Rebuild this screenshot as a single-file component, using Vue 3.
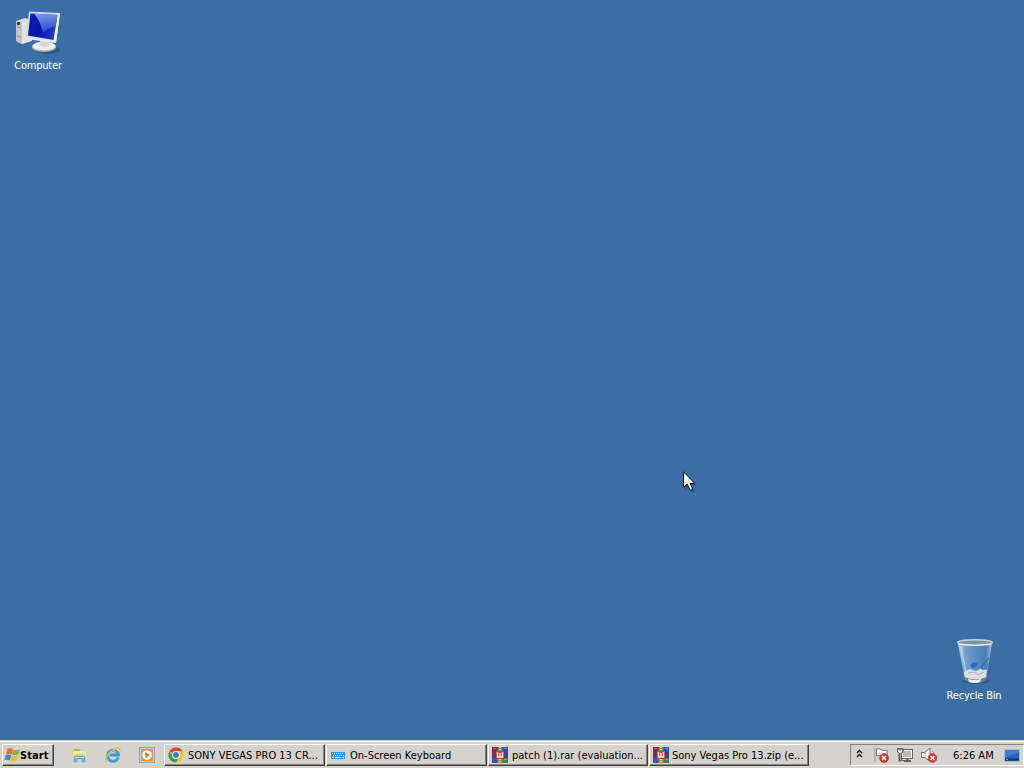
<script setup>
import { ref } from 'vue'

const active = ref('')
const tasks = [
    { id: 'chrome', icon: 'chrome', name: 'SONY VEGAS PRO 13 CR...' },
    { id: 'osk', icon: 'keyboard', name: 'On-Screen Keyboard' },
    { id: 'patch', icon: 'rar', name: 'patch (1).rar (evaluation...' },
    { id: 'vegas', icon: 'rar', name: 'Sony Vegas Pro 13.zip (e...' },
]
</script>
<template>
    <div class="screen">
        <div class="desktop">
            <div class="shortcut computer">
                <svg width="48" height="48" viewBox="0 0 48 48">
                    <defs>
                        <linearGradient id="scr" x1="0" y1="0" x2="1" y2="0.25">
                            <stop offset="0" stop-color="#0a1cb4" />
                            <stop offset="0.5" stop-color="#0a14a8" />
                            <stop offset="1" stop-color="#2038c4" />
                        </linearGradient>
                        <linearGradient id="glare" x1="0" y1="0" x2="0.3" y2="1">
                            <stop offset="0" stop-color="#9db8f2" />
                            <stop offset="1" stop-color="#2f50d4" />
                        </linearGradient>
                    </defs>
                    <ellipse cx="34" cy="42" rx="12" ry="4" fill="#1f4674" opacity=".5" />
                    <path d="M2 13 L11 10 L18 12 V33 L8 36 L2 33z" fill="#d9dcda" />
                    <path d="M2 13 L8 14 V36 L2 33z" fill="#c2c6c4" />
                    <path d="M8 14 L17 11 V33 L8 36z" fill="#e4e3df" />
                    <path d="M3 19 L7 20 M3 28 L7 29" stroke="#8d9293" />
                    <circle cx="4.500" cy="15.500" r="1.700" fill="#343b3f" />
                    <ellipse cx="30" cy="39" rx="12" ry="5" fill="#b4b9ba" />
                    <ellipse cx="30" cy="38" rx="11.500" ry="4.300" fill="#f0efeb" />
                    <path d="M27 29 H34 L35 38 Q30 41 25 37z" fill="#d4d6d3" />
                    <path d="M15 3.500 L46 5 L42 35 L12 30z" fill="#c9d8ea" />
                    <path d="M43 6 L46 5 L42 35 L39 32z" fill="#f2f1e8" />
                    <path d="M12 29 L41 33 L42 35 L12 31z" fill="#eceeec" />
                    <path d="M16.500 5.500 L43.500 7 L39.500 32 L14 27.500z" fill="url(#scr)" />
                    <path d="M20 5.700 L43.500 7 L41.800 18 Q34 20 29 25 Q26 12 20 5.700z" fill="url(#glare)" opacity=".85" />
                </svg>
                <span>Computer</span>
            </div>
            <div class="shortcut recycle">
                <svg width="48" height="48" viewBox="0 0 48 48">
                    <defs>
                        <linearGradient id="bin">
                            <stop offset="0" stop-color="#cfe0ed" />
                            <stop offset=".22" stop-color="#7ba6d2" />
                            <stop offset=".55" stop-color="#5a90c9" />
                            <stop offset=".82" stop-color="#4a7fba" />
                            <stop offset="1" stop-color="#b5cce0" />
                        </linearGradient>
                    </defs>
                    <ellipse cx="26" cy="43" rx="14" ry="3" fill="#234e80" opacity=".55" />
                    <path d="M8 6 L42 6 L36 42 Q26 47 15 42z" fill="url(#bin)" opacity=".88" />
                    <path d="M14 34 L19 31 L26 33 L30 31 L37 32 L36 40 Q26 44 15 40z" fill="#dcdee1" />
                    <path d="M18 35 L24 34 L28 37 L34 34" stroke="#b7aaae" fill="none" />
                    <path d="M20 27 L24 24 L28 26 L26 29 L22 30z" fill="#2a6bcb" />
                    <path d="M15 39 Q25 44 36 39 L35 43 Q26 47 16 43z" fill="#737f82" />
                    <path d="M18 41 Q25 43 31 41 L30 44 Q25 46 19 44z" fill="#eef1ec" />
                    <path d="M39 20 L31 29 L33 32" stroke="#2f649e" fill="none" />
                    <path d="M11 9 L17 40" stroke="#d2e5f3" stroke-width="1.500" opacity=".6" />
                    <ellipse cx="25" cy="4.500" rx="17.300" ry="2.800" fill="#7796a8" stroke="#c5d2d5" stroke-width="1.500" />
                    <path d="M9 6 Q25 9 41 6" stroke="#f0f4ef" fill="none" />
                </svg>
                <span>Recycle Bin</span>
            </div>
            <svg class="cursor" width="14" height="23" viewBox="0 0 14 23">
                <path d="M2 3 V19 L5.500 15.500 L9 22 L12 20.500 L9 14.500 H13z" fill="#1c3859" opacity=".45" />
                <path d="M.5 .8 V16.500 L4.200 13 L7.300 19.500 L9.800 18.300 L7 12.300 H11.700z" fill="#fff" stroke="#07101c" />
            </svg>
        </div>

        <div class="taskbar">
            <button class="start">
                <svg width="17" height="16" viewBox="0 0 17 16">
                    <path d="M3.500 2 Q6 .5 9 2.200 L7.500 7.500 Q5 6 2 7.500z" fill="#e66a31" />
                    <path d="M9.500 2.500 Q13 4 16 2.300 L14.500 7.500 Q12 9 8 7.600z" fill="#83b34b" />
                    <path d="M1.700 8 Q4.500 6.800 7.200 8.200 L5.800 13.500 Q3 12 .3 13.500z" fill="#428bc5" />
                    <path d="M7.700 8.400 Q11 9.800 14.300 8.200 L12.700 13.500 Q10 15 6.300 13.700z" fill="#f0bb35" />
                </svg>
                <b>Start</b>
            </button>
            <div class="quick">
                <svg width="16" height="16" viewBox="0 0 16 16">
                    <path d="M1 2 L6 1 L7 3 H14 V12 H1z" fill="#e3cd78" />
                    <path d="M2 4 H15 V12 H2z" fill="#f5e9a8" />
                    <path d="M3 3 H9" stroke="#69b873" stroke-width="1.500" />
                    <path d="M1 7 H15 L14 13 H2z" fill="#f0db85" />
                    <path d="M3 15 V11 Q3 9 5 9 H12 Q14 9 14 11 V15 H11 V12 H6 V15z" fill="#75b9d6" stroke="#4c9bc0" stroke-width=".6" />
                    <path d="M4 10.500 H13" stroke="#c7e9f3" />
                </svg>
                <svg width="16" height="16" viewBox="0 0 16 16">
                    <path d="M13.300 10.500 A5.500 5.500 0 1 1 13.500 8 H4.500" fill="none" stroke="#3c9fdc" stroke-width="2.800" />
                    <path d="M5 4.500 Q8 2.500 11 4.800" fill="none" stroke="#80d0f2" />
                    <path d="M2.500 14.500 Q-.5 15 1.300 10.700 Q5 4 11.500 1.300 Q16 -.1 14.500 4" fill="none" stroke="#dfbf55" stroke-width="1.500" />
                </svg>
                <svg width="16" height="16" viewBox="0 0 16 16">
                    <rect x=".5" y=".5" width="15" height="15" fill="#b9cfe4" stroke="#8aa9c6" />
                    <rect x="2" y="2" width="12" height="12" fill="#f0912a" />
                    <circle cx="8" cy="8" r="4.800" fill="#fff" />
                    <path d="M6.300 4.800 L10.800 8 L6.300 11.200z" fill="#e8741a" />
                </svg>
            </div>

            <div class="tasks">
                <button v-for="task in tasks" :key="task.id" class="task" :class="[task.id, { active: active === task.id }]" @click="active = task.id">
                    <svg v-if="task.icon === 'chrome'" width="16" height="16" viewBox="0 0 16 16">
                        <circle cx="8" cy="8" r="7.500" fill="#f2c32d" />
                        <path d="M8 8 L1.500 4.250 A7.500 7.500 0 0 1 14.500 4.250 H8z" fill="#db463b" />
                        <path d="M1.500 4.250 A7.500 7.500 0 0 0 8 15.500 L11.200 9.800 L8 8 L4.700 9.800z" fill="#3b9f55" />
                        <circle cx="8" cy="8" r="3.900" fill="#f7f8f5" />
                        <circle cx="8" cy="8" r="2.900" fill="#3979d7" />
                    </svg>
                    <svg v-else-if="task.icon === 'keyboard'" width="16" height="16" viewBox="0 0 16 16">
                        <rect x="1" y="5" width="14" height="7" fill="#3f8fd4" />
                        <path d="M2 6.500 H14 M3 8.500 H14" stroke="#d3e6f5" stroke-dasharray="1 1" />
                        <path d="M2 10.500 H4 M5 10.500 H11 M12 10.500 H14" stroke="#d3e6f5" />
                    </svg>
                    <svg v-else width="16" height="16" viewBox="0 0 16 16">
                        <rect x="0" y="0" width="8" height="5" fill="#8f2450" />
                        <rect x="8" y="0" width="8" height="5" fill="#2f4fb0" />
                        <rect x="0" y="5" width="16" height="6" fill="#3a3f9c" />
                        <rect x="0" y="5" width="5" height="6" fill="#7a2b62" />
                        <rect x="0" y="11" width="8" height="5" fill="#2b59b4" />
                        <rect x="8" y="11" width="8" height="5" fill="#2c8a42" />
                        <path d="M1 1.500 H4" stroke="#cf5b77" />
                        <path d="M12 1.500 H15" stroke="#5f86d8" />
                        <path d="M12 12.500 H15" stroke="#66b36a" />
                        <rect x="5.500" y="0" width="5" height="5" fill="#5f9c45" />
                        <rect x="5.500" y="11" width="5" height="5" fill="#b98a3c" />
                        <path d="M8 0 V4 M8 12 V16" stroke="#e0cf9a" stroke-dasharray="1 1" stroke-width="2" />
                        <rect x="4" y="4" width="8" height="8" fill="#cf3a32" />
                        <path d="M5.500 5 V10 H8 V6 M8 10 H10.500 V5" fill="none" stroke="#fff4e8" stroke-width="1.400" />
                    </svg>
                    <span>{{ task.name }}</span>
                </button>
            </div>

            <div class="tray">
                <svg class="chevron" width="8" height="9" viewBox="0 0 8 9">
                    <path d="M1 4 L3.500 1.500 L6 4 M1 8 L3.500 5.500 L6 8" fill="none" stroke="#151515" stroke-width="1.400" />
                </svg>
                <svg class="flag" width="16" height="16" viewBox="0 0 16 16">
                    <path d="M2 1 V15" stroke="#77736f" stroke-width="2" />
                    <path d="M2 1 V15" stroke="#fff" />
                    <path d="M3.500 2 Q6 1 8.500 3 Q11 4 14 3 V10 Q10 11 8 9 Q6 8 3.500 9z" fill="#f8f7f3" stroke="#777" />
                    <circle cx="11" cy="11" r="4.500" fill="#d23a3a" stroke="#a12325" stroke-width=".5" />
                    <path d="M9 9 L13 13 M13 9 L9 13" stroke="#fff" stroke-width="1.500" />
                </svg>
                <svg class="network" width="16" height="16" viewBox="0 0 16 16">
                    <rect x="4.500" y="2.500" width="11" height="9" fill="#f3f2ee" stroke="#65635f" />
                    <rect x="6" y="4" width="8" height="6" fill="#bbb8b3" />
                    <path d="M7 14 H14 M10.500 12 V14" stroke="#65635f" stroke-width="2" />
                    <path d="M0 1.500 H6 V5 L4.500 6.500 V13.500 H7 M2 6.500 V14" fill="none" stroke="#5d5a57" />
                    <path d="M.5 2 H5.500 V5 L4 6.500 V14 H2.500 V6.500 L.5 5z" fill="#f8f7f2" stroke="#5d5a57" />
                    <path d="M3 1 V4" stroke="#5d5a57" />
                </svg>
                <svg class="sound" width="16" height="16" viewBox="0 0 16 16">
                    <path d="M.5 5.500 H4 L9 1 V14.500 L4 10.500 H.5z" fill="#f7f6f1" stroke="#797570" />
                    <path d="M4 6 V10" stroke="#b8b3ad" />
                    <path d="M11 4 Q13 5 13 7" fill="none" stroke="#a6a19a" />
                    <circle cx="11.500" cy="11" r="4.400" fill="#d23a3a" stroke="#a12325" stroke-width=".5" />
                    <path d="M9.500 9 L13.500 13 M13.500 9 L9.500 13" stroke="#fff" stroke-width="1.500" />
                </svg>
                <span class="clock">6:26 AM</span>
                <svg class="show" width="16" height="13" viewBox="0 0 16 13">
                    <rect x=".5" y=".5" width="15" height="12" fill="#2a62b4" stroke="#a9bdd4" />
                    <path d="M1 1 H15 V4 Q8 5 1 9z" fill="#3f7dcc" />
                    <path d="M1 10.500 H15" stroke="#12306a" stroke-width="2" />
                    <path d="M2 10.500 H4" stroke="#7fb08a" />
                </svg>
            </div>
        </div>
    </div>
</template>

<style>
    body{
        margin: 0;
        overflow: hidden;
    }
</style>
<style scoped>
    .screen{
        width: 1024px;
        height: 768px;
        display: flex;
        flex-direction: column;
        background: #3a6ea5;
        font-family: "DejaVu Sans Condensed", "DejaVu Sans", sans-serif;
        font-stretch: condensed;
        font-size: 11px;
        color: #000;
        cursor: default;
    }
    .desktop{
        flex: 1;
        position: relative;
    }
    .shortcut{
        position: absolute;
        width: 76px;
        display: flex;
        flex-direction: column;
        align-items: center;
        color: #fff;
        line-height: 14px;
        letter-spacing: -.2px;
        white-space: nowrap;
    }
    .shortcut span{
        margin-top: 3px;
    }
    .computer{
        left: 0;
        top: 8px;
    }
    .recycle{
        left: 936px;
        top: 638px;
    }
    .cursor{
        position: absolute;
        left: 683px;
        top: 471px;
    }
    .taskbar{
        height: 28px;
        box-sizing: border-box;
        border-top: 1px solid #d4d0c8;
        box-shadow: inset 0 1px #fff;
        background: #d6d2cd;
        display: flex;
        align-items: flex-start;
        padding: 3px 0 0 2px;
    }
    button{
        height: 22px;
        box-sizing: border-box;
        display: flex;
        align-items: center;
        border: 1px solid;
        border-color: #fff #404040 #404040 #fff;
        box-shadow: inset -1px -1px #85817b;
        background: #d5d1cb;
        padding: 0 3px;
        font: inherit;
        color: #000;
        white-space: nowrap;
    }
    .start{
        width: 52px;
        padding: 0 0 0 1px;
    }
    .start b{
        margin-left: -1px;
        letter-spacing: .1px;
    }
    .quick{
        width: 110px;
        height: 22px;
        box-sizing: border-box;
        padding-left: 17px;
        display: flex;
        align-items: center;
        gap: 18px;
    }
    .tasks{
        display: flex;
        gap: 1px;
    }
    .task{
        width: 160px;
        gap: 4px;
    }
    .task.chrome,.task.osk{
        width: 161px;
    }
    .task.vegas{
        gap: 3px;
    }
    .task.active{
        border-color: #404040 #fff #fff #404040;
        box-shadow: none;
    }
    .task svg{
        flex: none;
    }
    .tray{
        width: 174px;
        height: 22px;
        margin-left: auto;
        box-sizing: border-box;
        border: 1px solid;
        border-color: #85817b #fff #fff #85817b;
        display: flex;
        align-items: center;
        padding-left: 5px;
    }
    .chevron{
        margin: 0 9px 3px 0;
    }
    .flag,.network{
        margin-right: 8px;
    }
    .clock{
        width: 42px;
        margin: 0 9px 0 16px;
        white-space: nowrap;
    }
    .show{
        flex: none;
    }
</style>
